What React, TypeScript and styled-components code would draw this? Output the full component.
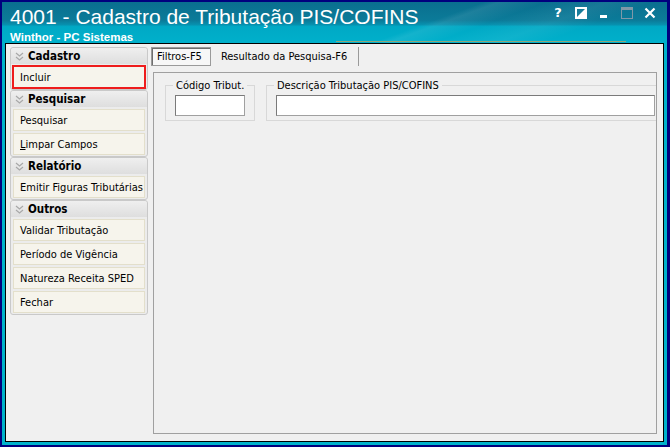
import React from "react";
import styled, { createGlobalStyle } from "styled-components";

const GlobalStyle = createGlobalStyle`
  html, body {
    margin: 0;
    padding: 0;
    overflow: hidden;
    background: #000080;
  }
  * { box-sizing: border-box; }
`;

const UI_FONT = `"DejaVu Sans Condensed", "DejaVu Sans", sans-serif`;

const Window = styled.div`
  width: 670px;
  height: 447px;
  border: 2px solid #00007e;
  border-right-width: 3px;
  background: #00b2cb;
  display: flex;
  flex-direction: column;
  padding: 0 3px 3px 3px;
`;

const TitleBar = styled.div`
  height: 41px;
  margin: 0 -3px;
  padding: 0 8px;
  display: flex;
  justify-content: space-between;
  background:
    linear-gradient(#8fa67a, #8fa67a) no-repeat 334px 39px / 290px 1px,
    linear-gradient(160deg, transparent 62%, rgba(255, 255, 255, 0.08) 64%, transparent 70%, rgba(255, 255, 255, 0.06) 78%, transparent 84%),
    linear-gradient(to bottom, #0a6f8f 0%, #0b7b99 45%, #0790ae 55%, #00a9c5 60%, #00b0cb 100%);
`;

const TitleTexts = styled.div`
  display: flex;
  flex-direction: column;
`;

const Title = styled.div`
  font-family: "Liberation Sans", Arial, sans-serif;
  font-size: 21px;
  line-height: 21px;
  margin-top: 4px;
  color: #ffffff;
  white-space: nowrap;
`;

const Subtitle = styled.div`
  font-family: "Liberation Sans", Arial, sans-serif;
  font-weight: bold;
  font-size: 11.5px;
  line-height: 12px;
  margin-top: 4px;
  color: #ffffff;
  white-space: nowrap;
`;

const Buttons = styled.div`
  display: flex;
  align-items: flex-start;
  gap: 11px;
  padding-top: 5px;
  padding-right: 3px;
`;

const TitleButton = styled.div`
  width: 12px;
  height: 12px;
  display: flex;
  align-items: center;
  justify-content: center;
  color: #ffffff;
  font-family: "DejaVu Sans", sans-serif;
  font-weight: bold;
  font-size: 13px;
  line-height: 12px;
`;

const Content = styled.div`
  flex: 1;
  border: 1px solid #000000;
  background: #f0f0f0;
  display: flex;
  min-height: 0;
`;

const Sidebar = styled.div`
  width: 145px;
  padding: 3px 0 0 4px;
  display: flex;
  flex-direction: column;
  gap: 0;
`;

const Group = styled.div`
  width: 138px;
  border: 1px solid #c9c9c9;
  border-radius: 3px;
  background: #ececec;
  padding: 0 2px 1px 2px;
  display: flex;
  flex-direction: column;
  gap: 2px;
`;

const GroupHeader = styled.div`
  height: 16px;
  margin: 0 -2px;
  padding-left: 4px;
  display: flex;
  align-items: center;
  gap: 4px;
  border-radius: 3px 3px 0 0;
  background: linear-gradient(to bottom, #efefef, #dedede);
  font-family: ${UI_FONT};
  font-weight: bold;
  font-size: 11.5px;
  color: #000000;
`;

const Item = styled.div<{ $active?: boolean }>`
  display: flex;
  align-items: center;
  padding-left: 6px;
  background: #f6f4ec;
  border: ${(p) => (p.$active ? "2px solid #ee1c1c" : "1px solid #e3dfcb")};
  margin: ${(p) => (p.$active ? "-1px -1px -1px" : "0")};
  height: ${(p) => (p.$active ? "24px" : "22px")};
  font-family: ${UI_FONT};
  font-size: 11px;
  color: #000000;
  white-space: nowrap;
`;

const Main = styled.div`
  flex: 1;
  display: flex;
  flex-direction: column;
  padding: 3px 6px 7px 0;
`;

const TabStrip = styled.div`
  height: 19px;
  display: flex;
`;

const Tab = styled.div<{ $selected?: boolean }>`
  height: 19px;
  display: flex;
  align-items: center;
  padding: ${(p) => (p.$selected ? "0 8px 0 5px" : "0 11px 0 10px")};
  font-family: ${UI_FONT};
  font-size: 11px;
  color: #000000;
  white-space: nowrap;
  background: ${(p) => (p.$selected ? "#f7f7f7" : "transparent")};
  border: ${(p) => (p.$selected ? "1px solid #9a9a9a" : "none")};
  border-right: 1px solid #9a9a9a;
  box-shadow: ${(p) => (p.$selected ? "inset 1px 1px 0 #6e6e6e" : "none")};
`;

const TabPanel = styled.div`
  flex: 1;
  margin: 6px 0 0 2px;
  border: 1px solid #a0a0a0;
  display: flex;
  align-items: flex-start;
  padding: 6px 0 0 11px;
  gap: 11px;
  overflow: hidden;
`;

const FieldGroup = styled.fieldset<{ $grow?: boolean }>`
  margin: 0;
  min-width: 0;
  border: 1px solid #d8d8d8;
  padding: 0 ${(p) => (p.$grow ? "0" : "7px")} 4px 7px;
  ${(p) => (p.$grow ? "flex: 1; border-right: none;" : "width: 90px;")}
`;

const Legend = styled.legend`
  padding: 0 3px;
  font-family: ${UI_FONT};
  font-size: 11px;
  line-height: 13px;
  color: #000000;
  white-space: nowrap;
`;

const TextBox = styled.div<{ $flush?: boolean }>`
  height: 21px;
  margin: 3px ${(p) => (p.$flush ? "1px" : "2px")} 0 2px;
  background: #ffffff;
  border: 1px solid #7a7a7a;
  border-right-color: #a0a0a0;
  border-bottom-color: #a0a0a0;
`;

const Chevron = () => (
  <svg width="9" height="9" viewBox="0 0 9 9" fill="none" stroke="#a8a8a8" strokeWidth="1.2">
    <polyline points="1,1 4.5,4 8,1" />
    <polyline points="1,5 4.5,8 8,5" />
  </svg>
);

const menu: { title: string; items: string[] }[] = [
  { title: "Cadastro", items: ["Incluir"] },
  { title: "Pesquisar", items: ["Pesquisar", "Limpar Campos"] },
  { title: "Relatório", items: ["Emitir Figuras Tributárias"] },
  { title: "Outros", items: ["Validar Tributação", "Período de Vigência", "Natureza Receita SPED", "Fechar"] },
];

const App = () => {
  return (
    <>
      <GlobalStyle />
      <Window>
        <TitleBar>
          <TitleTexts>
            <Title>4001 - Cadastro de Tributação PIS/COFINS</Title>
            <Subtitle>Winthor - PC Sistemas</Subtitle>
          </TitleTexts>
          <Buttons>
            <TitleButton>?</TitleButton>
            <TitleButton>
              <svg width="12" height="12" viewBox="0 0 12 12">
                <rect x="1" y="1" width="10" height="10" fill="none" stroke="#fff" strokeWidth="2" />
                <polygon points="11,1 11,11 1,11" fill="#fff" />
              </svg>
            </TitleButton>
            <TitleButton>
              <svg width="12" height="12" viewBox="0 0 12 12">
                <rect x="2" y="8" width="7" height="3" fill="#fff" />
              </svg>
            </TitleButton>
            <TitleButton>
              <svg width="12" height="12" viewBox="0 0 12 12">
                <rect x="0.5" y="0.5" width="11" height="11" fill="none" stroke="#7f98a8" strokeWidth="1" />
                <rect x="0" y="0" width="12" height="3" fill="#7f98a8" />
              </svg>
            </TitleButton>
            <TitleButton>
              <svg width="12" height="12" viewBox="0 0 12 12">
                <path d="M1.5 1.5 L10.5 10.5 M10.5 1.5 L1.5 10.5" stroke="#fff" strokeWidth="2.2" />
              </svg>
            </TitleButton>
          </Buttons>
        </TitleBar>
        <Content>
          <Sidebar>
            {menu.map((g) => (
              <Group key={g.title}>
                <GroupHeader>
                  <Chevron />
                  {g.title}
                </GroupHeader>
                {g.items.map((it) => (
                  <Item key={it} $active={it === "Incluir"}>
                    {it === "Limpar Campos" ? (
                      <span>
                        <u>L</u>impar Campos
                      </span>
                    ) : (
                      it
                    )}
                  </Item>
                ))}
              </Group>
            ))}
          </Sidebar>
          <Main>
            <TabStrip>
              <Tab $selected>Filtros-F5</Tab>
              <Tab>Resultado da Pesquisa-F6</Tab>
            </TabStrip>
            <TabPanel>
              <FieldGroup>
                <Legend>Código Tribut.</Legend>
                <TextBox />
              </FieldGroup>
              <FieldGroup $grow>
                <Legend>Descrição Tributação PIS/COFINS</Legend>
                <TextBox $flush />
              </FieldGroup>
            </TabPanel>
          </Main>
        </Content>
      </Window>
    </>
  );
};

export default App;
